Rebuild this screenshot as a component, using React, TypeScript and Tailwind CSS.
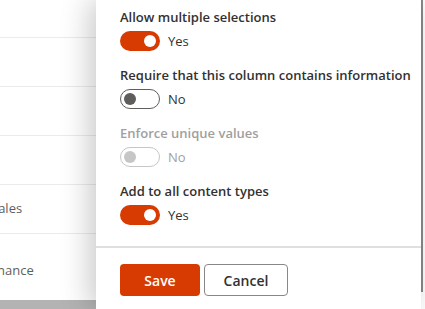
import React from "react";

const font = { fontFamily: '"Open Sans", "Noto Sans", sans-serif' };

function Toggle({ on, disabled }: { on: boolean; disabled?: boolean }) {
  if (on) {
    return (
      <span className="flex h-5 w-10 items-center justify-end rounded-full bg-[#d83b01] pr-[4px]">
        <span className="h-3 w-3 rounded-full bg-white" />
      </span>
    );
  }
  return (
    <span
      className={
        disabled
          ? "flex h-5 w-10 items-center rounded-full border border-[#c8c6c4] pl-[3px]"
          : "flex h-5 w-10 items-center rounded-full border border-[#605e5c] pl-[3px]"
      }
    >
      <span className={disabled ? "h-3 w-3 rounded-full bg-[#c8c6c4]" : "h-3 w-3 rounded-full bg-[#605e5c]"} />
    </span>
  );
}

function Setting({ label, on, disabled }: { label: string; on: boolean; disabled?: boolean }) {
  return (
    <div className="mb-[14px]">
      <div className={disabled ? "h-5 text-[13px] font-semibold leading-5 text-[#a19f9d]" : "h-5 text-[13px] font-semibold leading-5 text-[#323130]"}>
        {label}
      </div>
      <div className="mt-1 flex items-center gap-2">
        <Toggle on={on} disabled={disabled} />
        <span className={disabled ? "text-[13px] leading-5 text-[#a19f9d]" : "text-[13px] leading-5 text-[#323130]"}>
          {on ? "Yes" : "No"}
        </span>
      </div>
    </div>
  );
}

export default function App() {
  return (
    <div className="flex h-[309px] w-[425px] overflow-hidden bg-white" style={font}>
      {/* list behind the panel, mostly hidden */}
      <div className="flex w-[96px] shrink-0 flex-col overflow-hidden">
        <div className="flex-1">
          <div className="h-[38px] border-b border-[#edebe9]" />
          <div className="h-[49px] border-b border-[#edebe9]" />
          <div className="h-[49px] border-b border-[#edebe9]" />
          <div className="h-[49px] border-b border-[#edebe9]" />
          <div className="flex h-[49px] items-center border-b border-[#edebe9]">
            <span className="-ml-[9px] whitespace-nowrap text-[13px] text-[#605e5c]">Sales</span>
          </div>
          <div className="pt-[23px]">
            <span className="-ml-[13px] whitespace-nowrap text-[13px] leading-5 text-[#605e5c]">Finance</span>
          </div>
        </div>
        <div className="h-[9px] bg-[#b3b3b3]" />
      </div>
      <div className="relative z-10 flex w-[325px] shrink-0 flex-col bg-white shadow-[-6px_0_28px_rgba(0,0,0,0.22)]">
        <div className="pl-6 pt-[7px]">
          <Setting label="Allow multiple selections" on />
          <Setting label="Require that this column contains information" on={false} />
          <Setting label="Enforce unique values" on={false} disabled />
          <Setting label="Add to all content types" on />
        </div>
        <div className="mt-[7px] h-[2px] bg-[#e1dfdd]" />
        <div className="flex gap-1 pl-6 pt-4">
          <button className="h-8 w-20 rounded-sm bg-[#d83b01] text-[14px] font-semibold text-white">Save</button>
          <button className="h-8 w-[84px] rounded-sm border border-[#8a8886] bg-white text-[14px] font-semibold text-[#323130]">
            Cancel
          </button>
        </div>
      </div>
      <div className="flex flex-1 flex-col bg-white">
        <div className="h-[292px] w-[2px] bg-[#8a8a8a]" />
      </div>
    </div>
  );
}
